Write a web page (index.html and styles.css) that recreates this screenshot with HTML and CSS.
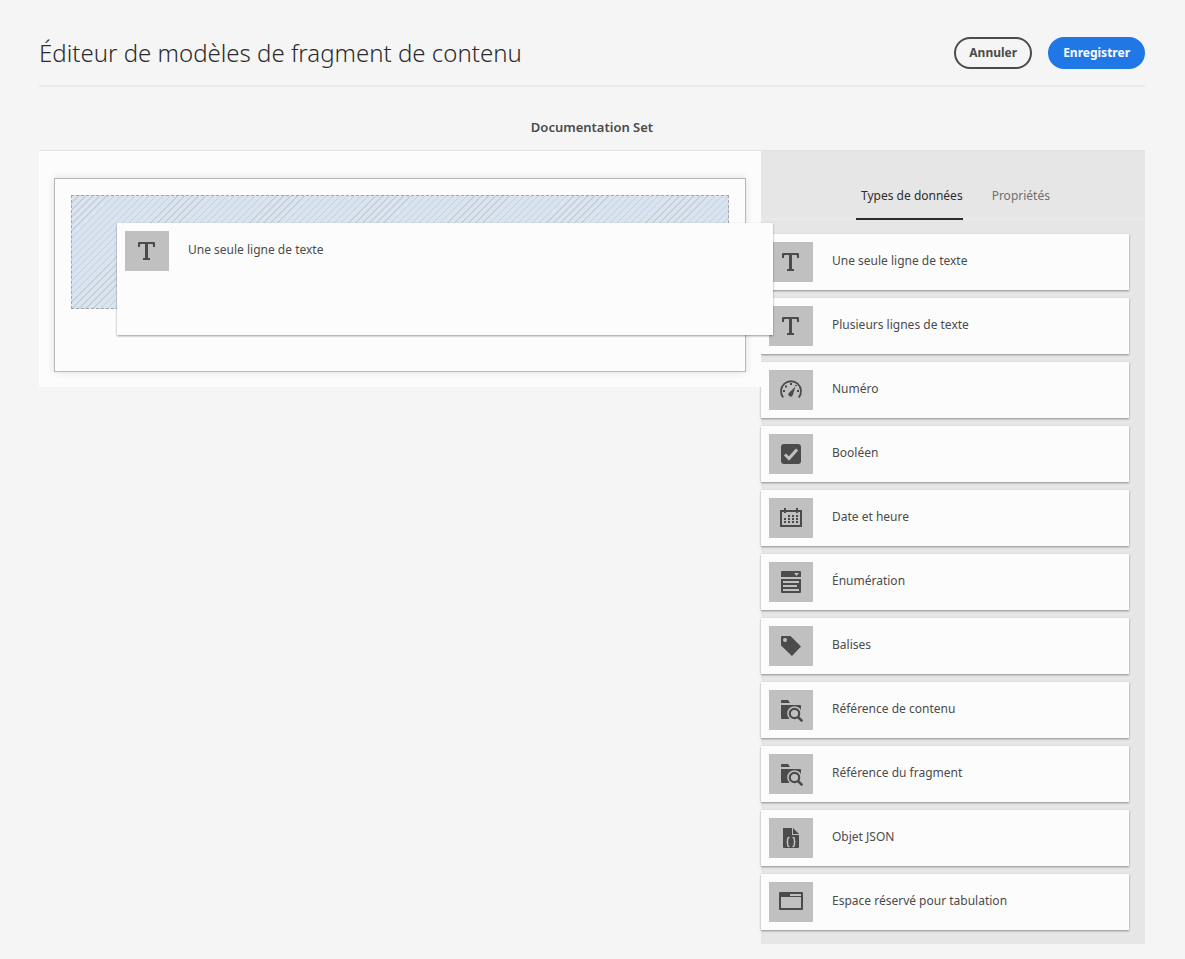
FILE: index.html
```html
<!DOCTYPE html>
<html lang="fr">
<head>
<meta charset="utf-8">
<meta name="viewport" content="width=device-width, initial-scale=1">
<title>Éditeur de modèles de fragment de contenu</title>
<link rel="stylesheet" href="styles.css">
</head>
<body>
<svg class="sprite" aria-hidden="true">
  <symbol id="i-text" viewBox="0 0 24 24"><path d="M4 3h15a1 1 0 0 1 1 1v4h-2V6a1 1 0 0 0-1-1h-4v14h2v2H8v-2h2V5H6a1 1 0 0 0-1 1v2H3V4a1 1 0 0 1 1-1z"/></symbol>
  <symbol id="i-gauge" viewBox="0 0 24 24"><path d="M4.200 19.500A10 10 0 1 1 19.800 19.500" fill="none" stroke="currentColor" stroke-width="1.800"/><path d="M16.500 8.500l-2.700 8.500a2.200 2.200 0 1 1-3.700-2.200z"/><path d="M4 12h2v2H4zM6 7.500h2v2H6zM11 5h2v2h-2zM16 7h2v1h-2zM18 12h2v2h-2z"/></symbol>
  <symbol id="i-check" viewBox="0 0 24 24"><rect x="2" y="2" width="20" height="20" rx="3"/><path d="M6 12.500l4 4L18 7.500" fill="none" stroke="#c0c0c0" stroke-width="3"/></symbol>
  <symbol id="i-calendar" viewBox="0 0 24 24"><path d="M1 4h22v17H1zM3 6v13h18V6z" fill-rule="evenodd"/><path d="M5 2h2v5H5zM17 2h2v5h-2zM9 9h2v2H9zM13 9h2v2h-2zM17 9h2v2h-2zM5 12h2v2H5zM9 12h2v2H9zM13 12h2v2h-2zM17 12h2v2h-2zM5 15h2v2H5zM9 15h2v2H9zM13 15h2v2h-2zM17 15h2v2h-2z"/></symbol>
  <symbol id="i-list" viewBox="0 0 24 24"><path d="M3 1h18a1 1 0 0 1 1 1v5H2V2a1 1 0 0 1 1-1zM15 3l2.500 3L20 3zM2 9h20v13a1 1 0 0 1-1 1H3a1 1 0 0 1-1-1zM4 11v2h16v-2zM4 15v2h14v-2zM4 19v2h16v-2z" fill-rule="evenodd"/></symbol>
  <symbol id="i-tag" viewBox="0 0 24 24"><path d="M3 2h8.500L22 12.500 13 22 2 11.500V3a1 1 0 0 1 1-1zM6 4a2 2 0 1 0 0 4 2 2 0 0 0 0-4z" fill-rule="evenodd"/></symbol>
  <symbol id="i-folder" viewBox="0 0 24 24"><path d="M2 5V3a1 1 0 0 1 1-1h6l2 3zM2 7h19a1 1 0 0 1 1 1v13H3a1 1 0 0 1-1-1z"/><circle cx="15.500" cy="15.500" r="7.300" fill="#c0c0c0"/><path d="M18 21h6v-6z" fill="#c0c0c0"/><circle cx="15.500" cy="15.500" r="4.700" fill="none" stroke="currentColor" stroke-width="2.200"/><path d="M19 19l4.300 4.300" stroke="currentColor" stroke-width="2.500"/></symbol>
  <symbol id="i-json" viewBox="0 0 24 24"><path d="M4 2h9v7h7v12a1 1 0 0 1-1 1H5a1 1 0 0 1-1-1z"/><path d="M14 2l6 6h-6z"/><path d="M10.500 11.500H10c-1 0-1.300.5-1.300 1.500v1.500c0 1-.4 1.500-1.200 1.500.8 0 1.200.5 1.200 1.500V19c0 1 .3 1.500 1.300 1.500h.5M13.500 11.500h.5c1 0 1.300.5 1.300 1.500v1.500c0 1 .4 1.500 1.200 1.500-.8 0-1.200.5-1.200 1.500V19c0 1-.3 1.500-1.300 1.500h-.5" fill="none" stroke="#c0c0c0" stroke-width="1.500"/></symbol>
  <symbol id="i-tab" viewBox="0 0 24 24"><path d="M1 2h22a1 1 0 0 1 1 1v16a1 1 0 0 1-1 1H1a1 1 0 0 1-1-1V3a1 1 0 0 1 1-1zM2 7v11h20V7zM11 4v2h11V4z" fill-rule="evenodd"/></symbol>
</svg>
<div class="page">
  <header class="header">
    <h1 class="title">Éditeur de modèles de fragment de contenu</h1>
    <div class="actions">
      <button class="button" type="button">Annuler</button>
      <button class="button button-primary" type="button">Enregistrer</button>
    </div>
  </header>
  <main>
    <h2 class="model-name">Documentation Set</h2>
    <div class="editor">
      <section class="canvas" aria-label="Modèle">
        <div class="form-area">
          <div class="drop-zone"></div>
        </div>
        <div class="card dragged"><span class="tile"><svg class="icon"><use href="#i-text"/></svg></span><span class="label">Une seule ligne de texte</span></div>
      </section>
      <aside class="panel">
        <div class="tabs" role="tablist">
          <button class="tab tab-active" type="button" role="tab" aria-selected="true">Types de données</button>
          <button class="tab" type="button" role="tab" aria-selected="false">Propriétés</button>
        </div>
        <ul class="types">
          <li class="card"><span class="tile"><svg class="icon"><use href="#i-text"/></svg></span><span class="label">Une seule ligne de texte</span></li>
          <li class="card"><span class="tile"><svg class="icon"><use href="#i-text"/></svg></span><span class="label">Plusieurs lignes de texte</span></li>
          <li class="card"><span class="tile"><svg class="icon"><use href="#i-gauge"/></svg></span><span class="label">Numéro</span></li>
          <li class="card"><span class="tile"><svg class="icon"><use href="#i-check"/></svg></span><span class="label">Booléen</span></li>
          <li class="card"><span class="tile"><svg class="icon"><use href="#i-calendar"/></svg></span><span class="label">Date et heure</span></li>
          <li class="card"><span class="tile"><svg class="icon"><use href="#i-list"/></svg></span><span class="label">Énumération</span></li>
          <li class="card"><span class="tile"><svg class="icon"><use href="#i-tag"/></svg></span><span class="label">Balises</span></li>
          <li class="card"><span class="tile"><svg class="icon"><use href="#i-folder"/></svg></span><span class="label">Référence de contenu</span></li>
          <li class="card"><span class="tile"><svg class="icon"><use href="#i-folder"/></svg></span><span class="label">Référence du fragment</span></li>
          <li class="card"><span class="tile"><svg class="icon"><use href="#i-json"/></svg></span><span class="label">Objet JSON</span></li>
          <li class="card"><span class="tile"><svg class="icon"><use href="#i-tab"/></svg></span><span class="label">Espace réservé pour tabulation</span></li>
        </ul>
      </aside>
    </div>
  </main>
</div>
</body>
</html>
```
FILE: styles.css
```css
* { box-sizing: border-box; }

body {
  margin: 0;
  background: #f5f5f5;
  color: #4b4b4b;
  font: 12px/20px "Noto Sans", "Open Sans", sans-serif;
}

button { font: inherit; cursor: pointer; }

.sprite { display: none; }

.page { padding: 20px 40px 15px 39px; }

.header {
  display: flex;
  align-items: center;
  justify-content: space-between;
  height: 67px;
  border-bottom: 2px solid #eaeaea;
}

.title {
  margin: 0;
  color: #2c2c2c;
  font-size: 24px;
  font-weight: 300;
  line-height: 36px;
}

.actions { display: flex; gap: 16px; }

.button {
  height: 32px;
  padding: 0 13px;
  border: 2px solid #4b4b4b;
  border-radius: 16px;
  background: transparent;
  color: #4b4b4b;
  font-weight: 700;
  line-height: 20px;
}

.button-primary {
  border-color: #1f78e6;
  background: #1f78e6;
  color: #fff;
}

.model-name {
  margin: 0;
  padding: 30px 0 13px;
  font-size: 13px;
  font-weight: 600;
  line-height: 20px;
  text-align: center;
}

.editor {
  display: flex;
  align-items: flex-start;
  border-top: 1px solid #e1e1e1;
}

.canvas {
  position: relative;
  flex: 1;
  padding: 27px 15px 15px;
  background: #fcfcfc;
}

.form-area {
  height: 194px;
  padding: 16px;
  border: 1px solid #b7b7b7;
  box-shadow: 0 0 8px rgba(0, 0, 0, 0.12);
}

.drop-zone {
  height: 114px;
  border: 1px dashed #a6a6a6;
  background: repeating-linear-gradient(135deg, #d8e4f1 0 4px, #cbcdd0 4px 5px);
}

.panel {
  width: 384px;
  padding: 24px 0 14px;
  background: #e6e6e6;
}

.tabs {
  display: flex;
  justify-content: center;
  gap: 24px;
  height: 45px;
  border-bottom: 2px solid #eaeaea;
}

.tab {
  height: 45px;
  padding: 0 0 1px 5px;
  border: 0;
  border-bottom: 2px solid transparent;
  background: none;
  color: #707070;
}

.tab-active {
  border-color: #2c2c2c;
  color: #2c2c2c;
}

.types {
  display: flex;
  flex-direction: column;
  gap: 8px;
  margin: 0;
  padding: 14px 16px 0 0;
  list-style: none;
}

.card {
  display: flex;
  align-items: flex-start;
  gap: 19px;
  min-height: 56px;
  padding: 8px;
  background: #fcfcfc;
  box-shadow: 0 1px 2px rgba(0, 0, 0, 0.4);
}

.dragged {
  position: absolute;
  top: 72px;
  left: 78px;
  z-index: 1;
  width: calc(100% - 66px);
  height: 112px;
}

.tile {
  display: flex;
  align-items: center;
  justify-content: center;
  width: 44px;
  height: 40px;
  background: #c0c0c0;
}

.icon {
  width: 24px;
  height: 24px;
  overflow: visible;
  color: #4b4b4b;
  fill: currentColor;
}

.label { padding-top: 9px; }
```
